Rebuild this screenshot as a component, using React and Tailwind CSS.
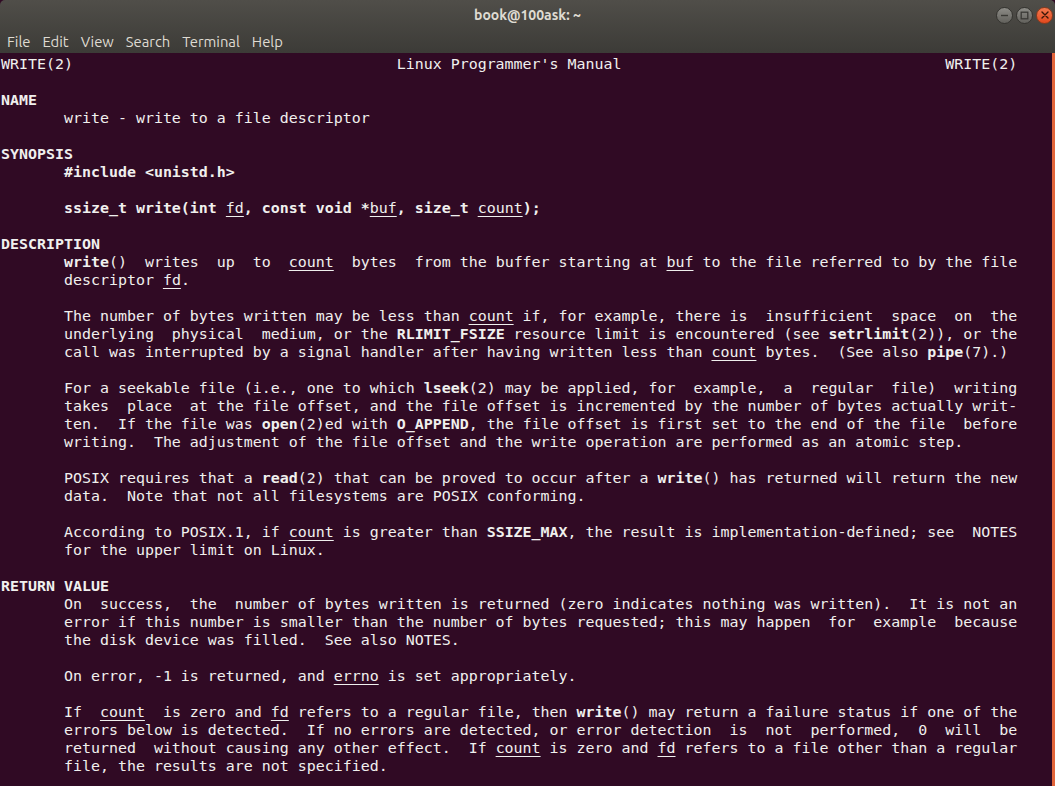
import React from "react";

const I = "       ";

const LINES = [
  "WRITE(2)".padEnd(44) + "Linux Programmer's Manual".padEnd(61) + "WRITE(2)",
  "",
  "{b:NAME}",
  I + "write - write to a file descriptor",
  "",
  "{b:SYNOPSIS}",
  I + "{b:#include <unistd.h>}",
  "",
  I + "{b:ssize_t write(int }{u:fd}{b:, const void *}{u:buf}{b:, size_t }{u:count}{b:);}",
  "",
  "{b:DESCRIPTION}",
  I + "{b:write}()  writes  up  to  {u:count}  bytes  from the buffer starting at {u:buf} to the file referred to by the file",
  I + "descriptor {u:fd}.",
  "",
  I + "The number of bytes written may be less than {u:count} if, for example, there is  insufficient  space  on  the",
  I + "underlying  physical  medium, or the {b:RLIMIT_FSIZE} resource limit is encountered (see {b:setrlimit}(2)), or the",
  I + "call was interrupted by a signal handler after having written less than {u:count} bytes.  (See also {b:pipe}(7).)",
  "",
  I + "For a seekable file (i.e., one to which {b:lseek}(2) may be applied, for  example,  a  regular  file)  writing",
  I + "takes  place  at the file offset, and the file offset is incremented by the number of bytes actually writ-",
  I + "ten.  If the file was {b:open}(2)ed with {b:O_APPEND}, the file offset is first set to the end of the file  before",
  I + "writing.  The adjustment of the file offset and the write operation are performed as an atomic step.",
  "",
  I + "POSIX requires that a {b:read}(2) that can be proved to occur after a {b:write}() has returned will return the new",
  I + "data.  Note that not all filesystems are POSIX conforming.",
  "",
  I + "According to POSIX.1, if {u:count} is greater than {b:SSIZE_MAX}, the result is implementation-defined; see  NOTES",
  I + "for the upper limit on Linux.",
  "",
  "{b:RETURN VALUE}",
  I + "On  success,  the  number of bytes written is returned (zero indicates nothing was written).  It is not an",
  I + "error if this number is smaller than the number of bytes requested; this may happen  for  example  because",
  I + "the disk device was filled.  See also NOTES.",
  "",
  I + "On error, -1 is returned, and {u:errno} is set appropriately.",
  "",
  I + "If  {u:count}  is zero and {u:fd} refers to a regular file, then {b:write}() may return a failure status if one of the",
  I + "errors below is detected.  If no errors are detected, or error detection  is  not  performed,  0  will  be",
  I + "returned  without causing any other effect.  If {u:count} is zero and {u:fd} refers to a file other than a regular",
  I + "file, the results are not specified.",
  "",
];

function renderLine(line) {
  const out = [];
  const re = /\{([bu]):([^}]*)\}/g;
  let last = 0;
  let m;
  let k = 0;
  while ((m = re.exec(line)) !== null) {
    if (m.index > last) out.push(<span key={k++}>{line.slice(last, m.index)}</span>);
    if (m[1] === "b") {
      out.push(
        <span key={k++} className="font-bold">
          {m[2]}
        </span>
      );
    } else {
      out.push(
        <span key={k++} className="underline underline-offset-[3px] decoration-1">
          {m[2]}
        </span>
      );
    }
    last = re.lastIndex;
  }
  if (last < line.length) out.push(<span key={k++}>{line.slice(last)}</span>);
  return out;
}

function WinButton({ kind }) {
  if (kind === "close") {
    return (
      <div className="w-[17px] h-[17px] rounded-full bg-gradient-to-b from-[#f5784d] to-[#e1481d] border border-[#8a3a1c] flex items-center justify-center">
        <svg width="8" height="8" viewBox="0 0 8 8">
          <path d="M1 1 L7 7 M7 1 L1 7" stroke="#3b1608" strokeWidth="1.4" strokeLinecap="round" />
        </svg>
      </div>
    );
  }
  return (
    <div className="w-[17px] h-[17px] rounded-full bg-gradient-to-b from-[#8d8c87] to-[#62615c] border border-[#34332f] flex items-center justify-center">
      {kind === "min" ? (
        <svg width="9" height="9" viewBox="0 0 9 9">
          <path d="M1 4.5 H8" stroke="#3a3935" strokeWidth="1.4" />
        </svg>
      ) : (
        <svg width="9" height="9" viewBox="0 0 9 9">
          <rect x="1.2" y="1.2" width="6.6" height="6.6" fill="none" stroke="#3a3935" strokeWidth="1.3" />
        </svg>
      )}
    </div>
  );
}

export default function App() {
  return (
    <div className="w-[1055px] h-[786px] overflow-hidden flex flex-col bg-[#300a24]">
      <div className="h-[53px] shrink-0 flex flex-col bg-gradient-to-b from-[#504e49] to-[#3c3b37] rounded-t-[5px]">
        <div className="h-[30px] grid grid-cols-[1fr_auto_1fr] items-center">
          <div />
          <div
            className="text-[14px] font-bold text-[#dfdbd2] pt-[1px]"
            style={{ fontFamily: "Ubuntu, 'Noto Sans', 'Open Sans', sans-serif" }}
          >
            book@100ask: ~
          </div>
          <div className="flex justify-end items-center gap-[3px] pr-[2px]">
            <WinButton kind="min" />
            <WinButton kind="max" />
            <WinButton kind="close" />
          </div>
        </div>
        <div
          className="h-[23px] flex items-center gap-[12px] pl-[7px] pt-[1px] text-[14.8px] text-[#dfdbd2]"
          style={{ fontFamily: "Ubuntu, 'Noto Sans', 'Open Sans', sans-serif" }}
        >
          <span>File</span>
          <span>Edit</span>
          <span>View</span>
          <span>Search</span>
          <span>Terminal</span>
          <span>Help</span>
        </div>
      </div>
      <div className="flex-1 flex min-h-0">
        <div
          className="flex-1 pt-[2px] pl-px text-[14.95px] leading-[18px] text-[#f0f0ee] overflow-hidden"
          style={{ fontFamily: "'DejaVu Sans Mono', 'Liberation Mono', monospace" }}
        >
          {LINES.map((l, i) => (
            <div key={i} className="h-[18px] whitespace-pre">
              {renderLine(l)}
            </div>
          ))}
        </div>
        <div className="w-[3px] bg-[#e2653a]" />
      </div>
    </div>
  );
}
